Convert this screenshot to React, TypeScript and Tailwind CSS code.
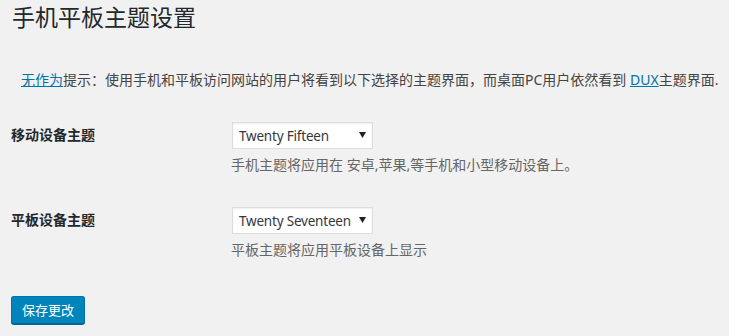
import React from "react";

function FakeSelect({ value }: { value: string }) {
  return (
    <div className="flex h-[27px] w-[141px] items-center justify-between border border-[#ddd] bg-white pl-[6px] pr-[6px] text-[13.5px] leading-[20px] text-[#32373c] shadow-[inset_0_1px_2px_rgba(0,0,0,0.07)]">
      <span className="whitespace-nowrap tracking-[-0.2px]">{value}</span>
      <svg width="7" height="6" viewBox="0 0 7 6" className="mb-[1px] shrink-0">
        <path d="M0 0 L7 0 L3.5 6 Z" fill="#222" />
      </svg>
    </div>
  );
}

function Row({ label, value, desc }: { label: string; value: string; desc: string }) {
  return (
    <div className="flex">
      <div className="w-[221px] shrink-0 pt-[3px] text-[14px] font-bold leading-[20px] text-[#23282d]">{label}</div>
      <div className="flex flex-col">
        <FakeSelect value={value} />
        <p className="mt-[6px] -ml-px whitespace-nowrap text-[14px] leading-[20px] text-[#666]">{desc}</p>
      </div>
    </div>
  );
}

export default function App() {
  return (
    <div
      className="min-h-[336px] w-full bg-[#f1f1f1] pl-[11px] pt-[3px]"
      style={{ fontFamily: '"Noto Sans", "Noto Sans CJK SC", sans-serif' }}
    >
      <h2 className="pl-px text-[23px] font-normal leading-[29px] text-[#23282d]">手机平板主题设置</h2>
      <p className="mt-[38px] whitespace-nowrap pl-[10px] text-[14px] leading-[20px] text-[#444]">
        <a href="#" className="text-[#0073aa] underline">无作为</a>
        提示：使用手机和平板访问网站的用户将看到以下选择的主题界面，而桌面PC用户依然看到{" "}
        <a href="#" className="text-[#0073aa] underline">DUX</a>
        主题界面.
      </p>
      <div className="mt-[32px] flex flex-col gap-[32px]">
        <Row label="移动设备主题" value="Twenty Fifteen" desc="手机主题将应用在 安卓,苹果,等手机和小型移动设备上。" />
        <Row label="平板设备主题" value="Twenty Seventeen" desc="平板主题将应用平板设备上显示" />
      </div>
      <div className="mt-[36px]">
        <button className="h-[28px] w-[74px] rounded-[3px] border border-[#0073aa] border-b-[#006799] bg-[#0085ba] text-[13px] leading-[26px] text-white shadow-[0_1px_0_#006799]">
          保存更改
        </button>
      </div>
    </div>
  );
}
